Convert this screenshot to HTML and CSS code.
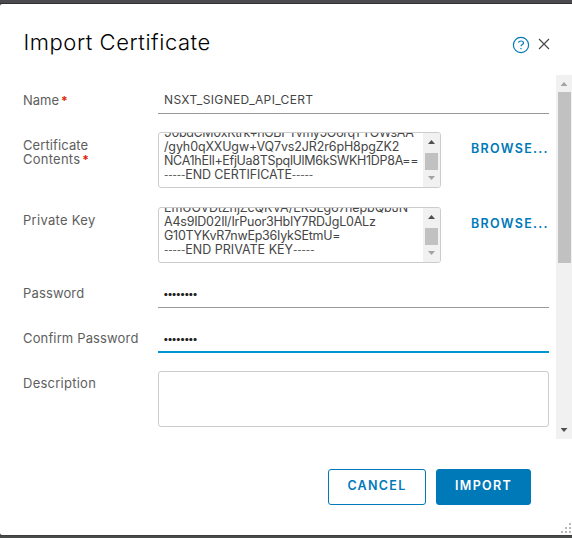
FILE: index.html
```
<!DOCTYPE html>
<html lang="en">
<head>
<meta charset="utf-8">
<title>Import Certificate</title>
<link rel="stylesheet" href="styles.css">
</head>
<body>
<div class="modal">
  <header class="head">
    <h1>Import Certificate</h1>
    <svg class="help" width="18" height="18" viewBox="0 0 18 18"><circle cx="9" cy="9" r="7.6"/><path d="M6.500 6.700C6.700 5.500 7.600 5 9 5c1.500 0 2.500.7 2.500 1.900C11.500 8.600 9 8.600 9 10.200M9 12v1.300"/></svg>
    <svg class="close" width="12" height="12" viewBox="0 0 12 12"><path d="M1 1l10 10M11 1L1 11"/></svg>
  </header>
  <main class="body">
    <form class="form">
      <div class="row line-row">
        <label class="l-name">Name<b>*</b></label>
        <div class="input"><span class="v-name">NSXT_SIGNED_API_CERT</span></div>
      </div>
      <div class="row">
        <label><span class="l-cert">Certificate</span><br><span class="l-cont">Contents</span><b>*</b></label>
        <div class="area short">
          <div class="text"><span class="c1">90bdCM0xKtrk+nGBPTvmy5O6rqTYOWsAA</span><span class="c2">/gyh0qXXUgw+VQ7vs2JR2r6pH8pgZK2</span><span class="c3">NCA1hEIl+EfjUa8TSpqlUlM6kSWKH1DP8A==</span><span class="c4"><i>-----</i>END CERTIFICATE<i>-----</i></span></div>
          <div class="mini"><i class="up"></i><i class="mini-thumb"></i><i class="down pale"></i></div>
        </div>
        <a class="browse">BROWSE...</a>
      </div>
      <div class="row key-row">
        <label class="l-key">Private Key</label>
        <div class="area short">
          <div class="text"><span class="k1">EmUGVDtZnjZcQKVA/EK3Lg67nepbQbJN</span><span class="k2">A4s9ID02Il/IrPuor3HbIY7RDJgL0ALz</span><span class="k3">G10TYKvR7nwEp36IykSEtmU=</span><span class="k4"><i>-----</i>END PRIVATE KEY<i>-----</i></span></div>
          <div class="mini"><i class="up"></i><i class="mini-thumb"></i><i class="down pale"></i></div>
        </div>
        <a class="browse">BROWSE...</a>
      </div>
      <div class="row line-row">
        <label class="l-pass">Password</label>
        <div class="input dots">••••••••</div>
      </div>
      <div class="row line-row">
        <label class="l-conf">Confirm Password</label>
        <div class="input dots focus">••••••••</div>
      </div>
      <div class="row">
        <label class="l-desc">Description</label>
        <div class="area wide"></div>
      </div>
    </form>
    <div class="scroll"><i class="up pale"></i><i class="thumb"></i><i class="down"></i></div>
  </main>
  <footer class="foot">
    <button class="btn cancel"><span>CANCEL</span></button>
    <button class="btn import"><span>IMPORT</span></button>
  </footer>
  <svg class="grip" width="11" height="11" viewBox="0 0 11 11"><path d="M8 0h2v2H8zM4 4h2v2H4zM8 4h2v2H8zM0 8h2v2H0zM4 8h2v2H4zM8 8h2v2H8z"/></svg>
</div>
</body>
</html>
```
FILE: styles.css
```
* { box-sizing: border-box; }
body {
  margin: 0;
  width: 572px;
  height: 538px;
  overflow: hidden;
  padding: 4px 0 3px;
  background: linear-gradient(#4b4b4d 0 3px, #303032 3px 4px, #303032 4px 535px, #494b4b 536px);
  font-family: Inter, sans-serif;
  font-size: 13px;
  color: #5e5e5e;
}
.modal {
  position: relative;
  height: 531px;
  background: #fff;
  border-radius: 2px 0 0 2px;
}
.head {
  display: flex;
  height: 71px;
  padding: 24px 22px 0 23.5px;
}
h1 {
  flex: 1;
  margin: 0;
  font-size: 22px;
  font-weight: 300;
  line-height: 28px;
  letter-spacing: 0.55px;
  color: #000;
}
svg { fill: none; }
.help { margin: 8px 8px 0 0; stroke: #0079b8; stroke-width: 1.2; }
.close { margin-top: 10px; stroke: #444; stroke-width: 1.1; }
.body { display: flex; height: 364px; }
.form {
  flex: 1;
  display: flex;
  flex-direction: column;
  gap: 19px;
  padding: 12px 7px 0 23px;
}
.row { display: flex; height: 56px; }
.line-row { height: 26px; }
.key-row { margin-bottom: -1px; }
label {
  width: 135px;
  padding-top: 6px;
  line-height: 14px;
  white-space: nowrap;
}
label b {
  margin-left: 2px;
  color: #e12200;
  font-size: 12px;
  line-height: 10px;
}
.l-cert { letter-spacing: 0.1px; }
.l-cont { letter-spacing: 0.25px; }
.l-key { letter-spacing: 0.25px; }
.l-key { letter-spacing: 0.25px; font-size: 13.5px; }
.l-pass, .l-conf { letter-spacing: 0.14px; padding-top: 5px; }
.l-desc { letter-spacing: 0.25px; padding-top: 5px; }
.l-key { font-size: 13px; letter-spacing: 0.3px; word-spacing: 0; }
.input {
  flex: 1;
  height: 27px;
  padding: 0 6px;
  border-bottom: 1px solid #999;
  line-height: 26px;
  font-size: 12px;
  letter-spacing: 0.36px;
  color: #454545;
}
.dots { padding-left: 5px; font-size: 10px; line-height: 24px; letter-spacing: -1.45px; color: #222; }
.focus { border-bottom: 2px solid #0095d3; }
.area {
  height: 56px;
  border: 1px solid #ccc;
  border-radius: 3px;
}
.short { display: flex; width: 283px; overflow: hidden; }
.wide { flex: 1; }
.text {
  flex: 1;
  height: 54px;
  overflow: hidden;
  padding-left: 5px;
  font-size: 12.5px;
  color: #454545;
}
.text span {
  display: block;
  height: 14px;
  line-height: 14px;
  white-space: nowrap;
}
.text span:first-child { margin-top: -7px; }
.text i {
  font-style: normal;
  font-size: 9.5px;
  line-height: 8px;
  vertical-align: 1px;
  letter-spacing: -0.1px;
}
.c1 { letter-spacing: -0.36px; }
.c2 { letter-spacing: -0.13px; }
.c3 { letter-spacing: -0.31px; }
.c4 { letter-spacing: -0.13px; }
.k1 { letter-spacing: -0.1px; }
.k2 { letter-spacing: -0.22px; }
.k3 { letter-spacing: -0.25px; }
.mini {
  display: flex;
  flex-direction: column;
  align-items: center;
  width: 17px;
  padding-top: 7px;
  background: #f1f1f1;
}
.mini-thumb { width: 13px; height: 17px; margin: 9px 0 6px; background: #c1c1c1; }
.up, .down {
  width: 7px;
  height: 4px;
  background: #505050;
  clip-path: polygon(50% 0, 100% 100%, 0 100%);
}
.down { clip-path: polygon(0 0, 100% 0, 50% 100%); }
.pale { background: #a3a3a3; }
.browse {
  margin-left: 30px;
  padding-top: 9px;
  line-height: 16px;
  font-size: 12.5px;
  font-weight: 600;
  letter-spacing: 1.3px;
  color: #0079b8;
}
.scroll {
  display: flex;
  flex-direction: column;
  align-items: center;
  width: 16px;
  padding: 7px 0;
  background: #f1f1f1;
}
.thumb { width: 13px; height: 171px; margin: 6px 0 auto 1px; background: #c1c1c1; }
.foot {
  display: flex;
  justify-content: flex-end;
  gap: 10px;
  padding: 30px 41px 0 0;
}
.btn {
  height: 36px;
  padding: 0;
  border: 1px solid #0079b8;
  border-radius: 3px;
  background: #fff;
  color: #0079b8;
  font: 600 12.5px/32px Inter, sans-serif;
  letter-spacing: 1.3px;
}
.btn span { display: block; height: 34px; }
.cancel { width: 98px; }
.import { width: 95px; background: #0079b8; color: #fff; }
.grip { position: absolute; right: 0; bottom: 1px; fill: #b8b8b8; }
```
